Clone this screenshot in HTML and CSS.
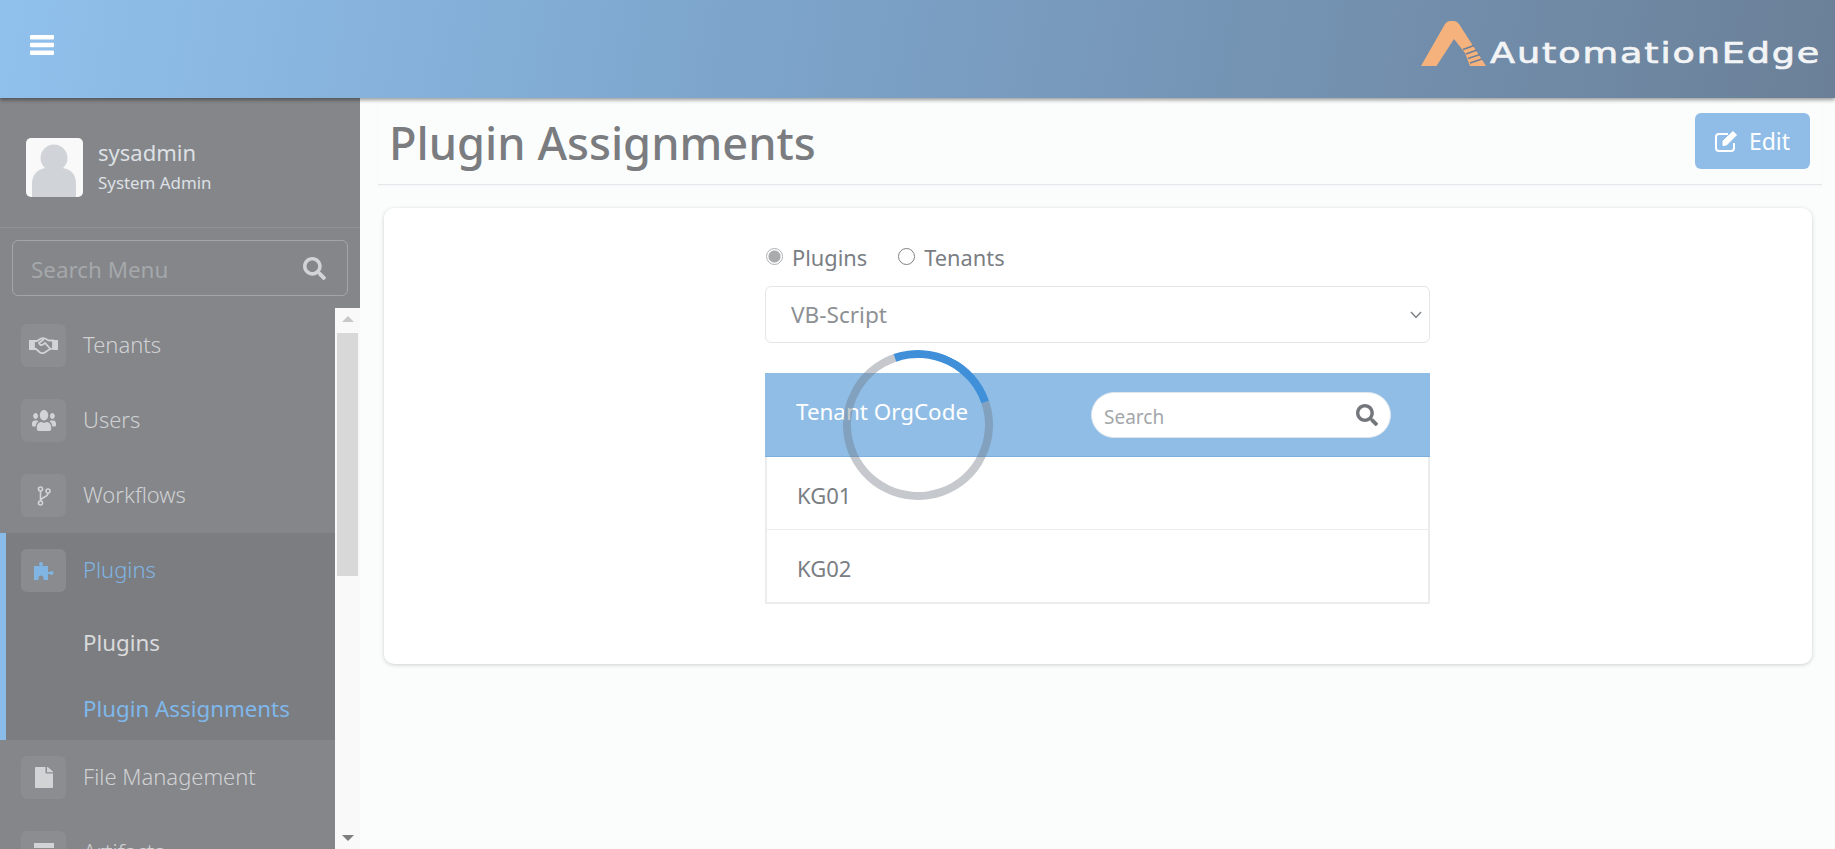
FILE: index.html
```html
<!DOCTYPE html>
<html lang="en">
<head>
  <meta charset="UTF-8">
  <meta name="viewport" content="width=device-width, initial-scale=1.0">
  <title>Plugin Assignments</title>
  <link rel="stylesheet" href="styles.css">
</head>
<body>
  <header class="topbar">
    <svg class="menu-toggle" viewBox="0 0 24 20"><rect width="24" height="4.4" rx="1"/><rect y="7.8" width="24" height="4.4" rx="1"/><rect y="15.6" width="24" height="4.4" rx="1"/></svg>
    <div class="logo">
      <svg class="logo-mark" viewBox="0 0 66 46">
        <path d="M0 45 L24 3 Q26 0 29 0 L33 0 Q36 0 38 3 L65 45 L49 45 L44 32 L33 18 L15.500 45 Z" fill="#f6b27c"/>
        <path d="M42 28.500 L53 24.500 M45 33 L56 29 M47 37.500 L59 33.500 M49 42 L61 38" stroke="#6b8098" stroke-width="1.500" fill="none"/>
      </svg>
      <span class="logo-text">AutomationEdge</span>
    </div>
  </header>

  <div class="layout">
    <aside class="sidebar">
      <div class="profile">
        <svg class="avatar" viewBox="0 0 57 59">
          <rect width="57" height="59" rx="5" fill="#f9f9f9"/>
          <circle cx="28" cy="20" r="13.5" fill="#d0d4d8"/>
          <path d="M6 59 V46 C6 36 12 31 20 30 Q28 36 36 30 C45 31 50 36 50 46 V59 Z" fill="#d0d4d8"/>
        </svg>
        <div>
          <div class="profile-name">sysadmin</div>
          <div class="profile-role">System Admin</div>
        </div>
      </div>
      <div class="menu-search">
        <input class="menu-search-input" type="text" placeholder="Search Menu">
        <svg class="icon-search" viewBox="0 0 512 512"><path d="M505 442.7L405.3 343c-4.5-4.5-10.6-7-17-7H372c27.6-35.3 44-79.7 44-128C416 93.1 322.9 0 208 0S0 93.1 0 208s93.1 208 208 208c48.3 0 92.7-16.4 128-44v16.3c0 6.4 2.5 12.5 7 17l99.7 99.7c9.4 9.4 24.6 9.4 33.9 0l28.3-28.3c9.4-9.4 9.4-24.6.1-34zM208 336c-70.7 0-128-57.2-128-128 0-70.7 57.2-128 128-128 70.7 0 128 57.2 128 128 0 70.7-57.2 128-128 128z"/></svg>
      </div>

      <div class="menu-wrap">
        <nav class="menu">
          <a class="menu-item" href="#">
            <span class="menu-icon">
              <svg viewBox="0 0 29 17" width="29" height="17"><path d="M0 3 H5 V13 H0 Z M24 3 H29 V13 H24 Z" fill="#d2d3d5"/><path d="M5 4 H8 L12 1.500 Q14 1 16 1.500 L20 3.500 H24 V11.500 L21 12 L15 16 Q13 16.500 11 15.500 L7 12 H5 Z" fill="none" stroke="#d2d3d5" stroke-width="1.800"/><path d="M15 2 L10 6 Q11 9 14 7.500 L16 6 L21 11.500" fill="none" stroke="#d2d3d5" stroke-width="1.800"/></svg>
            </span>
            Tenants
          </a>
          <a class="menu-item" href="#">
            <span class="menu-icon">
              <svg viewBox="0 32 640 448" width="24" height="21" preserveAspectRatio="none"><path fill="#d2d3d5" d="M96 224c35.3 0 64-28.7 64-64s-28.7-64-64-64-64 28.7-64 64 28.7 64 64 64zm448 0c35.3 0 64-28.7 64-64s-28.7-64-64-64-64 28.7-64 64 28.7 64 64 64zm32 32h-64c-17.6 0-33.5 7.1-45.1 18.6 40.3 22.1 68.9 62 75.1 109.4h66c17.7 0 32-14.3 32-32v-32c0-35.3-28.7-64-64-64zm-256 0c61.9 0 112-50.1 112-112S381.9 32 320 32 208 82.1 208 144s50.1 112 112 112zm76.8 32h-8.3c-20.8 10-43.9 16-68.5 16s-47.6-6-68.5-16h-8.3C179.6 288 128 339.6 128 403.2V432c0 26.5 21.5 48 48 48h288c26.5 0 48-21.5 48-48v-28.8c0-63.6-51.6-115.2-115.2-115.2zm-223.7-13.4C161.5 263.1 145.6 256 128 256H64c-35.3 0-64 28.7-64 64v32c0 17.7 14.3 32 32 32h65.9c6.3-47.4 34.9-87.3 75.2-109.4z"/></svg>
            </span>
            Users
          </a>
          <a class="menu-item" href="#">
            <span class="menu-icon">
              <svg viewBox="0 0 14 20" width="14" height="20" fill="none" stroke="#d2d3d5" stroke-width="1.600"><circle cx="3.500" cy="3" r="2"/><circle cx="3.500" cy="17" r="2"/><circle cx="11" cy="5" r="2"/><path d="M3.500 5 V15 M11 7 C11 12 3.500 10.500 3.500 15"/></svg>
            </span>
            Workflows
          </a>
          <div class="menu-group">
            <a class="menu-item menu-item-active" href="#">
              <span class="menu-icon">
                <svg viewBox="0 0 20 18" width="20" height="18" fill="#7fb4e3"><path d="M0 4 H14 V18 H9.500 V16 A2.500 2.500 0 0 0 4.500 16 V18 H0 Z"/><circle cx="7" cy="2" r="2"/><rect x="6" y="2" width="2" height="3"/><circle cx="17.500" cy="11" r="2"/><rect x="13" y="10" width="4" height="2"/></svg>
              </span>
              Plugins
            </a>
            <a class="submenu-item" href="#">Plugins</a>
            <a class="submenu-item submenu-item-active" href="#">Plugin Assignments</a>
          </div>
          <a class="menu-item" href="#">
            <span class="menu-icon">
              <svg viewBox="0 0 384 512" width="18" height="21" preserveAspectRatio="none"><path fill="#d2d3d5" d="M224 136V0H24C10.700 0 0 10.700 0 24v464c0 13.300 10.700 24 24 24h336c13.300 0 24-10.700 24-24V160H248c-13.200 0-24-10.800-24-24zm160-14.100v6.100H256V0h6.100c6.400 0 12.500 2.500 17 7l97.900 98c4.500 4.500 7 10.600 7 16.900z"/></svg>
            </span>
            File Management
          </a>
          <a class="menu-item" href="#">
            <span class="menu-icon">
              <svg viewBox="0 0 20 20" width="20" height="20"><rect width="20" height="5" fill="#d2d3d5"/><rect x="1" y="7" width="18" height="13" fill="#d2d3d5"/></svg>
            </span>
            Artifacts
          </a>
        </nav>
        <div class="scrollbar">
          <span class="scroll-arrow-up"></span>
          <span class="scroll-thumb"></span>
          <span class="scroll-arrow-down"></span>
        </div>
      </div>
    </aside>

    <main class="content">
      <div class="page-title">
        <h1>Plugin Assignments</h1>
        <button class="edit-btn">
          <svg viewBox="0 0 24 22" width="24" height="22" fill="none" stroke="#fff" stroke-width="2"><path d="M19 13 V18 Q19 21 16 21 H4 Q1 21 1 18 V7 Q1 4 4 4 H13"/><path d="M8 11 L18 1.500 L21.500 5 L11.500 15 L8 15.500 Z" fill="#fff" stroke-width="1"/></svg>
          Edit
        </button>
      </div>

      <section class="card">
        <div class="assign-box">
          <div class="radio-row">
            <label class="radio-label"><input class="radio" type="radio" name="mode" checked> Plugins</label>
            <label class="radio-label"><input class="radio" type="radio" name="mode"> Tenants</label>
          </div>
          <div class="select-box">
            VB-Script
            <svg viewBox="0 0 12 8" width="12" height="8" fill="none" stroke="#7d8287" stroke-width="1.500"><path d="M1 1 L6 6.500 L11 1"/></svg>
          </div>
          <div class="tenant-table">
            <div class="tenant-head">
              <span>Tenant OrgCode</span>
              <div class="tenant-search">
                <input class="tenant-search-input" type="text" placeholder="Search">
                <svg class="icon-search-small" viewBox="0 0 512 512"><path d="M505 442.7L405.3 343c-4.5-4.5-10.6-7-17-7H372c27.6-35.3 44-79.7 44-128C416 93.1 322.9 0 208 0S0 93.1 0 208s93.1 208 208 208c48.3 0 92.7-16.4 128-44v16.3c0 6.4 2.5 12.5 7 17l99.7 99.7c9.4 9.4 24.6 9.4 33.9 0l28.3-28.3c9.4-9.4 9.4-24.6.1-34zM208 336c-70.7 0-128-57.2-128-128 0-70.7 57.2-128 128-128 70.7 0 128 57.2 128 128 0 70.7-57.2 128-128 128z"/></svg>
              </div>
            </div>
            <div class="tenant-row">KG01</div>
            <div class="tenant-row">KG02</div>
          </div>
        </div>
      </section>
    </main>
  </div>

  <div class="spinner"></div>
</body>
</html>
```

FILE: styles.css
```css
* {
  box-sizing: border-box;
}
html, body {
  height: 100%;
}
body {
  margin: 0;
  overflow: hidden;
  font-family: "Noto Sans", "Open Sans", sans-serif;
  background-color: #fbfdfd;
  color: #73777c;
}
a {
  text-decoration: none;
}
.topbar {
  position: relative;
  z-index: 2;
  height: 98px;
  display: flex;
  align-items: center;
  justify-content: space-between;
  padding: 0 15px 8px 30px;
  background: linear-gradient(100deg, #90c1ec 0%, #7da5cc 40%, #6b8098 100%);
  box-shadow: 0 2px 4px rgba(0,0,0,0.4);
}
.menu-toggle {
  width: 24px;
  height: 20px;
  fill: #fff;
}
.logo {
  display: flex;
  align-items: flex-end;
}
.logo-mark {
  width: 66px;
  height: 46px;
  margin-bottom: 3px;
}
.logo-text {
  display: inline-block;
  width: 330px;
  font-family: "DejaVu Sans", sans-serif;
  font-size: 29px;
  line-height: 34px;
  white-space: nowrap;
  color: #f2f4f6;
  letter-spacing: 1.5px;
  margin-left: 3px;
  -webkit-text-stroke: 0.7px #f2f4f6;
  transform: scaleX(1.26);
  transform-origin: left center;
}
.layout {
  display: flex;
  height: calc(100% - 98px);
}
.sidebar {
  width: 360px;
  flex-shrink: 0;
  background-color: #84868a;
  display: flex;
  flex-direction: column;
}
.profile {
  display: flex;
  align-items: center;
  gap: 15px;
  height: 130px;
  padding: 10px 0 0 26px;
  border-bottom: 1px solid #8f9195;
}
.avatar {
  width: 57px;
  height: 59px;
}
.profile-name {
  font-size: 22px;
  line-height: 29px;
  color: #dde0e4;
}
.profile-role {
  font-size: 16.9px;
  line-height: 31px;
  color: #dde0e4;
}
.menu-search {
  margin: 12px 12px 0;
  height: 56px;
  border: 1px solid #a3a5a8;
  border-radius: 6px;
  display: flex;
  align-items: center;
  padding: 0 21px 0 18px;
}
.menu-search-input {
  flex: 1;
  min-width: 0;
  padding: 2px 0 0;
  border: none;
  outline: none;
  background: transparent;
  font: inherit;
  font-size: 22.4px;
  color: #d2d3d5;
}
.menu-search-input::placeholder {
  color: #a5a8ab;
  opacity: 1;
}
.icon-search {
  width: 23px;
  height: 23px;
  fill: #d2d3d5;
}
.menu-wrap {
  flex: 1;
  min-height: 0;
  margin-top: 12px;
  display: flex;
  overflow: hidden;
}
.menu {
  flex: 1;
  min-width: 0;
  overflow: hidden;
}
.menu-item {
  display: flex;
  align-items: center;
  gap: 17px;
  height: 75px;
  padding: 0 0 4px 21px;
  font-size: 22px;
  font-weight: 300;
  color: #d0d1d3;
}
.menu-icon {
  width: 45px;
  height: 43px;
  margin-top: 4px;
  flex-shrink: 0;
  border-radius: 6px;
  background-color: #8b8d90;
  display: flex;
  align-items: center;
  justify-content: center;
}
.menu-group {
  background-color: #7c7d81;
  border-left: 6px solid #89bce9;
}
.menu-item-active {
  color: #7fb4e3;
  padding-left: 15px;
}
.menu-item-active .menu-icon {
  background-color: #898b8f;
}
.submenu-item {
  display: block;
  padding: 4px 0 0 77px;
  font-size: 22.3px;
  line-height: 62px;
  color: #dadbdc;
}
.submenu-item-active {
  color: #7fb7ea;
}
.scrollbar {
  position: relative;
  width: 25px;
  flex-shrink: 0;
  background-color: #f9f9f9;
}
.scroll-thumb {
  position: absolute;
  top: 25px;
  left: 2px;
  width: 21px;
  height: 243px;
  background-color: #d8d8d8;
}
.scroll-arrow-up,
.scroll-arrow-down {
  position: absolute;
  left: 7px;
  width: 0;
  height: 0;
  border-left: 6px solid transparent;
  border-right: 6px solid transparent;
}
.scroll-arrow-up {
  top: 8px;
  border-bottom: 6px solid #c8c8c8;
}
.scroll-arrow-down {
  bottom: 8px;
  border-top: 6px solid #7f7f7f;
}
.content {
  flex: 1;
  min-width: 0;
  padding: 0 13px 0 18px;
}
.page-title {
  height: 87px;
  display: flex;
  align-items: center;
  justify-content: space-between;
  padding: 0 12px;
  border-bottom: 1px solid #e4e8ec;
  box-shadow: 0 1px 2px rgba(0,0,0,0.03);
}
.page-title h1 {
  margin: 3px 0 0 -1px;
  font-size: 45.2px;
  font-weight: 500;
  color: #7a7c80;
}
.edit-btn {
  display: flex;
  align-items: center;
  gap: 10px;
  width: 115px;
  height: 56px;
  justify-content: center;
  border: none;
  border-radius: 6px;
  background-color: #90bde7;
  color: #fff;
  font: inherit;
  font-size: 23px;
}
.card {
  margin: 23px 10px 0 6px;
  height: 456px;
  background-color: #fff;
  border-radius: 10px;
  box-shadow: 0 1px 4px rgba(0,0,0,0.18);
  padding: 28px 0 0 381px;
}
.assign-box {
  width: 665px;
}
.radio-row {
  display: flex;
  gap: 30px;
  height: 50px;
  align-items: flex-start;
  padding-top: 2px;
}
.radio-label {
  display: flex;
  align-items: center;
  gap: 9px;
  font-size: 21.8px;
  line-height: 40px;
  color: #7a7e83;
}
.radio {
  appearance: none;
  width: 17px;
  height: 17px;
  margin: 0 0 3px 1px;
  border: 1px solid #7d8185;
  border-radius: 50%;
  background-color: #fff;
}
.radio:checked {
  border-color: #b0b2b4;
  background: radial-gradient(circle, #a9abad 0 5.5px, #fff 6.5px);
}
.select-box {
  height: 57px;
  border: 1px solid #e3e5e8;
  border-radius: 6px;
  display: flex;
  align-items: center;
  justify-content: space-between;
  padding: 0 7px 0 25px;
  font-size: 22.6px;
  color: #8d9094;
}
.tenant-table {
  margin-top: 30px;
}
.tenant-head {
  height: 84px;
  background-color: #8fbde6;
  border-bottom: 1px solid #7fafdc;
  display: flex;
  align-items: center;
  justify-content: space-between;
  padding: 0 39px 7px 31px;
  color: #fff;
  font-size: 22.4px;
}
.tenant-search {
  position: relative;
  width: 300px;
  height: 46px;
  margin-top: 7px;
  border: 1px solid #dfe6ee;
  border-radius: 23px;
  background-color: #fff;
  display: flex;
  align-items: center;
  padding: 0 12px;
}
.tenant-search-input {
  flex: 1;
  min-width: 0;
  padding: 4px 0 0;
  border: none;
  outline: none;
  font: inherit;
  font-size: 19px;
}
.tenant-search-input::placeholder {
  color: #a3a6aa;
  opacity: 1;
}
.icon-search-small {
  width: 22px;
  height: 22px;
  fill: #73777c;
}
.tenant-row {
  height: 73px;
  border: 2px solid #ececec;
  border-top: none;
  border-bottom-width: 1px;
  display: flex;
  align-items: center;
  padding: 3px 0 0 30px;
  font-size: 22px;
  color: #7a7e83;
}
.tenant-row:last-child {
  height: 74px;
  border-bottom-width: 2px;
}
/* loading ring, lies over the table */
.spinner {
  position: absolute;
  top: 350px;
  left: 843px;
  width: 150px;
  height: 150px;
  border-radius: 50%;
  border: 8px solid rgba(110,120,130,0.4);
  border-top-color: #3f90d8;
  transform: rotate(26deg);
}
```
